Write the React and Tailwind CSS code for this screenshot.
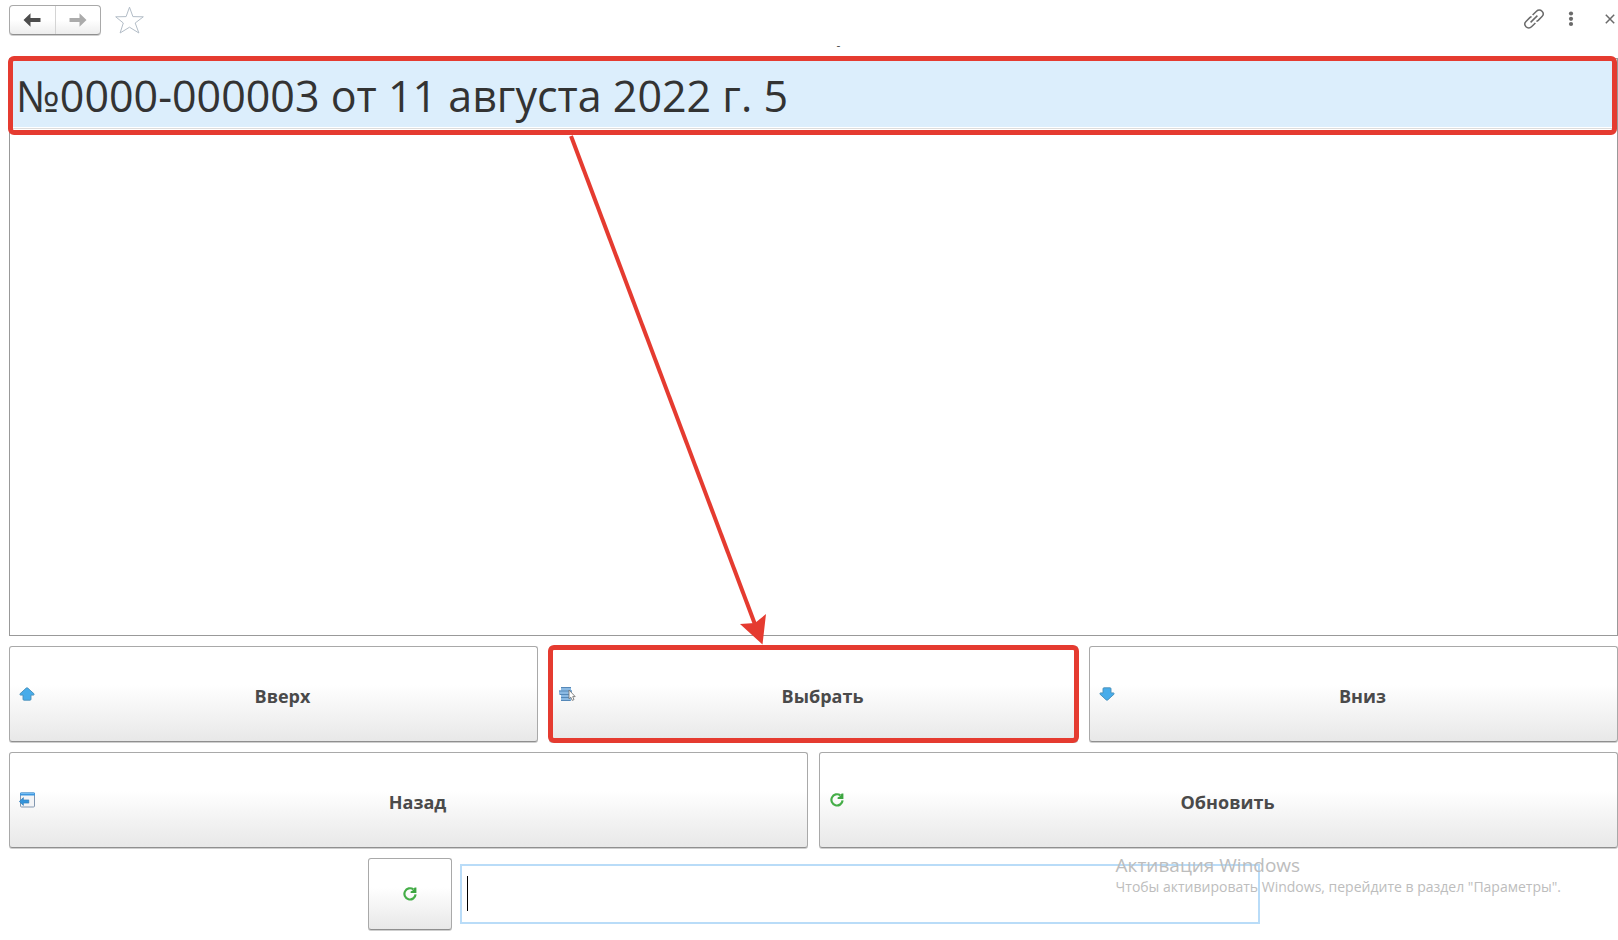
import React from "react";

const raised =
  "rounded-[3px] border border-[#a9a9a9] border-b-[#8f8f8f] bg-linear-to-b from-white from-40% to-[#e8e8e8] shadow-[0_1px_0_#cfcfcf]";

function NavArrow({ flip, color }) {
  return (
    <svg width="18" height="14" viewBox="0 0 18 14" className={flip ? "rotate-180" : ""} aria-hidden="true">
      <path d="M0.5 7 7.5 0.3V5H17.5V9H7.5V13.7Z" fill={color} />
    </svg>
  );
}

function BlueArrow({ down }) {
  return (
    <svg width="16" height="14" viewBox="0 0 16 14" className={down ? "rotate-180" : ""} aria-hidden="true">
      <path
        d="M7.2 1.1Q8 0.5 8.8 1.1L15 6.8Q15.5 7.8 14.5 8.1H12V12.2Q12 13.2 11 13.2H5Q4 13.2 4 12.2V8.1H1.5Q0.5 7.8 1 6.8Z"
        fill="#47acea"
        stroke="#4a8fb8"
        strokeWidth="0.9"
        strokeLinejoin="round"
      />
    </svg>
  );
}

function RefreshIcon() {
  return (
    <svg width="14" height="14" viewBox="0 0 14 14" aria-hidden="true">
      <path d="M10.4 2.4A5.6 5.6 0 1 0 12.6 7.4" fill="none" stroke="#45ae48" strokeWidth="2.2" />
      <path d="M13.4 0.4V6H7.6V4.4L10 3.2 11.6 0.6Z" fill="#3da641" />
    </svg>
  );
}

function BackIcon() {
  return (
    <svg width="17" height="16" viewBox="0 0 17 16" aria-hidden="true">
      <rect x="1.5" y="1" width="14" height="14" rx="1" fill="#f3f4f6" stroke="#8297b0" />
      <path d="M1 1.5Q1 0.5 2 0.5H15Q16 0.5 16 1.5V3.6H1Z" fill="#3d97e0" />
      <path d="M2 1.5H15" stroke="#74bdf3" />
      <path d="M0.3 9.5 4.4 5.6V7.9H9.8V11.1H4.4V13.4Z" fill="#3494db" stroke="#2d78b5" strokeWidth="0.6" />
    </svg>
  );
}

function SelectIcon() {
  return (
    <svg width="18" height="16" viewBox="0 0 18 16" aria-hidden="true">
      <path d="M3 1H13V4.5H14V8H13V15H3V8H1V4.5H3Z" fill="#8bb9e2" />
      <path d="M3 1.5H13M1 5H14M1.5 8.5H13M3 11.5H12M3 14.5H12.5" stroke="#5588b8" />
      <path d="M11 4V12.8L12.8 11.2 14.2 14.4 16 13.6 14.7 10.6H17.2Z" fill="#fff" stroke="#777" strokeWidth="0.9" />
    </svg>
  );
}

function ActionButton({ icon, children, marked }) {
  return (
    <button type="button" className={`relative flex h-24 min-w-0 flex-1 items-center px-2 ${raised}`}>
      <span className="flex w-[18px] justify-center">{icon}</span>
      <span className="flex-1 pt-[3px] text-center text-[18px] leading-6 font-bold text-[#4a4a4a]">{children}</span>
      {marked && (
        <span className="pointer-events-none absolute -inset-x-[2px] -inset-y-[2px] rounded-md border-5 border-[#e53b30]" />
      )}
    </button>
  );
}

export default function App() {
  return (
    <main className="flex min-h-screen flex-col bg-white pb-[10px] pl-[9px] font-['Open_Sans','Noto_Sans',sans-serif] text-[#333]">
      <header className="flex h-10 items-start pt-[5px]">
        <div className="flex h-[30px] w-[92px] overflow-hidden rounded border border-[#a9a9a9] border-b-[#8f8f8f] bg-linear-to-b from-white from-50% to-[#ededed] shadow-[0_1px_0_#cfcfcf]">
          <button type="button" aria-label="Назад" className="flex flex-1 items-center justify-center border-r border-[#d4d4d4]">
            <NavArrow color="#4d4d4d" />
          </button>
          <button type="button" aria-label="Вперед" className="flex flex-1 items-center justify-center">
            <NavArrow flip color="#ababab" />
          </button>
        </div>
        <button type="button" aria-label="В избранное" className="ml-[13px]">
          <svg width="31" height="30" viewBox="0 0 31 30" aria-hidden="true">
            <path
              d="M15.5 2.2 18.9 11.6 29.3 11.8 21.2 18 24.9 28 15.5 22.2 6.1 28 9.3 18 1.7 11.8 12.1 11.6Z"
              fill="none"
              stroke="#b3bdc7"
            />
          </svg>
        </button>
        <div className="ml-auto flex h-7 items-center">
          <button type="button" aria-label="Ссылка">
            <svg width="22" height="22" viewBox="0 0 22 22" fill="none" stroke="#6a6a6a" strokeWidth="1.5" aria-hidden="true">
              <path d="M7.6 14.4 14.4 7.6" />
              <path d="M9.6 7 13.5 3.2A3.9 3.9 0 0 1 19 3.2 3.9 3.9 0 0 1 19 8.6L15.2 12.4Q14.4 13.1 13.4 13.2" />
              <path d="M12.4 15 8.5 18.8A3.9 3.9 0 0 1 3 18.8 3.9 3.9 0 0 1 3 13.4L6.8 9.6Q7.6 8.9 8.6 8.8" />
            </svg>
          </button>
          <button type="button" aria-label="Меню" className="ml-[22px]">
            <svg width="8" height="16" viewBox="0 0 8 16" fill="#6a6a6a" aria-hidden="true">
              <circle cx="4" cy="2.5" r="2.1" />
              <circle cx="4" cy="7.8" r="2.1" />
              <circle cx="4" cy="13" r="2.1" />
            </svg>
          </button>
          <button type="button" aria-label="Закрыть" className="mr-[3px] ml-[30px]">
            <svg width="10" height="10" viewBox="0 0 10 10" stroke="#6a6a6a" strokeWidth="1.5" aria-hidden="true">
              <path d="M0.8 0.8 9.2 9.2M9.2 0.8 0.8 9.2" />
            </svg>
          </button>
        </div>
      </header>

      <p className="h-[18px] pl-[50px] text-center text-xs leading-3 text-[#555]">-</p>

      <section className="relative flex-1 border border-[#999]">
        <ul>
          <li className="relative border-b border-[#ddd] pt-[2px] pb-px">
            <div className="h-[66px] bg-[#dceefc] pl-[6px] text-[43px] leading-[70px] whitespace-nowrap text-[#333]">
              №0000-000003 от 11 августа 2022 г. 5
            </div>
            <span className="pointer-events-none absolute -top-[3px] right-0 -bottom-[7px] -left-[2px] rounded-md border-5 border-[#e53b30]" />
          </li>
        </ul>
        <svg
          className="pointer-events-none absolute top-0 left-0 z-10 overflow-visible"
          width="800"
          height="586"
          viewBox="0 0 800 586"
          aria-hidden="true"
        >
          <path d="M561 77 746 568" stroke="#e53b30" strokeWidth="4" />
          <path d="M752.5 585.5 730 565 745 564 756 555Z" fill="#e53b30" />
        </svg>
      </section>

      <div className="mt-[10px] flex gap-[11px]">
        <ActionButton icon={<BlueArrow />}>Вверх</ActionButton>
        <ActionButton icon={<SelectIcon />} marked>Выбрать</ActionButton>
        <ActionButton icon={<BlueArrow down />}>Вниз</ActionButton>
      </div>
      <div className="mt-[10px] flex gap-[11px]">
        <ActionButton icon={<BackIcon />}>Назад</ActionButton>
        <ActionButton icon={<RefreshIcon />}>Обновить</ActionButton>
      </div>

      <div className="relative mt-[10px] flex items-center justify-center gap-2">
        <button type="button" aria-label="Обновить" className={`flex h-[72px] w-[84px] items-center justify-center ${raised}`}>
          <RefreshIcon />
        </button>
        <div className="relative w-[800px]">
          <input
            type="text"
            aria-label="Штрихкод"
            className="block h-[60px] w-full border-2 border-[#b9dcf8] bg-transparent px-[6px] text-2xl outline-none"
          />
          <span className="absolute top-3 left-[7px] h-[35px] w-px bg-black" />
        </div>
        <div className="pointer-events-none absolute -top-[5px] right-[57px] whitespace-nowrap text-[#bdbdbd]">
          <p className="text-[19px] leading-6">Активация Windows</p>
          <p className="text-sm leading-5">Чтобы активировать Windows, перейдите в раздел "Параметры".</p>
        </div>
      </div>
    </main>
  );
}
